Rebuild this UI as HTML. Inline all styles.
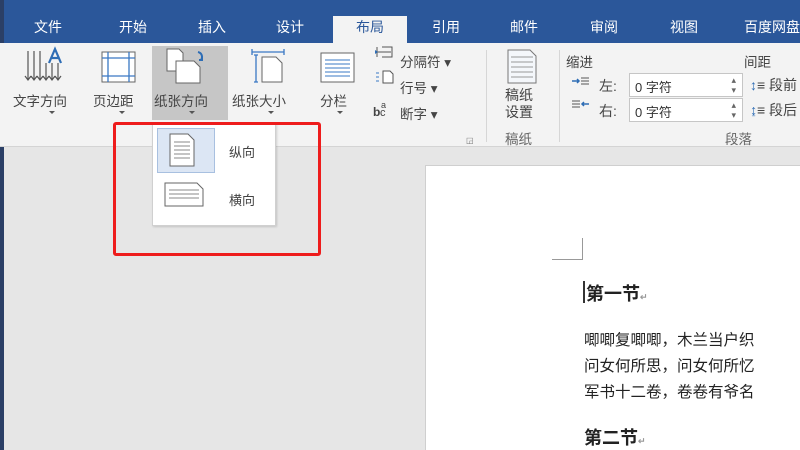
<!DOCTYPE html>
<html><head><meta charset="utf-8"><style>
*{margin:0;padding:0;box-sizing:border-box}
body{width:800px;height:450px;overflow:hidden;position:relative;background:#e6e6e6;font-family:"Liberation Sans","Noto Sans CJK SC",sans-serif;color:#333}
.a{position:absolute}
.tabs{left:0;top:0;width:800px;height:43px;background:#2b579a}
.tab{position:absolute;top:17px;color:#fff;font-size:14px;transform:translateX(-50%);white-space:nowrap}
.rib{left:0;top:43px;width:800px;height:104px;background:#f3f3f3;border-bottom:1px solid #d4d4d4}
.lb{position:absolute;font-size:13.5px;color:#444;white-space:nowrap}
.ar{position:absolute;width:0;height:0;border-left:3px solid transparent;border-right:3px solid transparent;border-top:3px solid #555}
.inp{position:absolute;width:114px;height:24px;background:#fff;border:1px solid #c6c6c6;font-size:13px;padding:3px 5px;color:#333}
.sep{position:absolute;width:1px;background:#d6d6d6}
</style></head><body>
<div class="a tabs"></div>
<div class="a" style="left:0;top:0;width:4px;height:450px;background:#2b3f66"></div>
<div class="a" style="left:333px;top:16px;width:74px;height:28px;background:#f3f3f3"></div>
<div class="tab" style="left:48px">文件</div>
<div class="tab" style="left:133px">开始</div>
<div class="tab" style="left:212px">插入</div>
<div class="tab" style="left:290px">设计</div>
<div class="tab" style="left:370px;color:#2b579a">布局</div>
<div class="tab" style="left:446px">引用</div>
<div class="tab" style="left:524px">邮件</div>
<div class="tab" style="left:604px">审阅</div>
<div class="tab" style="left:684px">视图</div>
<div class="tab" style="left:772px">百度网盘</div>
<div class="a rib"></div>
<div class="a" style="left:152px;top:46px;width:76px;height:74px;background:#c6c6c6"></div>
<svg class="a" style="left:0;top:43px" width="560" height="80">
<g stroke="#555" stroke-width="1.2" fill="none">
<path d="M28 8v28M34 8v28M40 8v28M46 20v16M52 20v16M58 20v16"/>
<path d="M25 33l3 4 3-4M31 33l3 4 3-4M37 33l3 4 3-4M43 33l3 4 3-4M49 33l3 4 3-4M55 33l3 4 3-4"/>
</g>
<path d="M49 20l6-14 6 14M51.5 15h7" stroke="#2e6db5" stroke-width="2.2" fill="none"/>
<rect x="102" y="9" width="33" height="30" fill="#fff" stroke="#666"/>
<path d="M108 9v30M129 9v30M102 15h33M102 33h33" stroke="#3a78c4" stroke-width="1.3"/>
<path d="M167 6h12l4 4v18h-16z" fill="#fff" stroke="#666"/>
<path d="M176 18h18l6 6v16h-24z" fill="#fff" stroke="#666"/>
<path d="M198 9c4 1 5 5 3 8M199 17l3 0 0-3" stroke="#2e6db5" stroke-width="2" fill="none"/>
<path d="M252 9h32M252 6v6M284 6v6M256 12v27M254 12h4M254 39h4" stroke="#3a78c4" stroke-width="1.3" fill="none"/>
<path d="M262 14h14l6 6v19h-20z" fill="#fff" stroke="#666"/>
<rect x="321" y="10" width="33" height="29" fill="#fff" stroke="#666"/>
<path d="M325 17h25M325 21h25M325 25h25M325 29h25M325 33h25" stroke="#3a78c4"/>
<path d="M377 4v10M377 9h4M381 9h10M382 4h10v10h-10" stroke="#555" fill="none"/>
<path d="M378 9l-3-2v4z" fill="#2e6db5"/>
<path d="M376 30h3M376 34h3M376 38h3" stroke="#3a78c4"/>
<path d="M383 28h7l3 3v9h-10z" fill="#fff" stroke="#555"/>
<text x="373" y="73" font-size="12" font-weight="bold" fill="#444" font-family="Liberation Sans">b</text>
<text x="380" y="73" font-size="11" fill="#444" font-family="Liberation Sans">c</text>
<text x="381" y="65" font-size="9" fill="#444" font-family="Liberation Sans">a</text>
<path d="M508 7h22l6 6v27h-28z" fill="#f4f7fb" stroke="#777"/>
<path d="M511 14h22M511 19h22M511 24h22M511 29h22M511 34h22" stroke="#999"/>
</svg>
<div class="lb" style="left:13px;top:90px">文字方向</div>
<div class="lb" style="left:93px;top:90px">页边距</div>
<div class="lb" style="left:154px;top:90px">纸张方向</div>
<div class="lb" style="left:232px;top:90px">纸张大小</div>
<div class="lb" style="left:320px;top:90px">分栏</div>
<div class="ar" style="left:49px;top:111px"></div>
<div class="ar" style="left:119px;top:111px"></div>
<div class="ar" style="left:189px;top:111px"></div>
<div class="ar" style="left:268px;top:111px"></div>
<div class="ar" style="left:337px;top:111px"></div>
<div class="lb" style="left:400px;top:51px">分隔符 ▾</div>
<div class="lb" style="left:400px;top:77px">行号 ▾</div>
<div class="lb" style="left:400px;top:103px">断字 ▾</div>
<div class="a" style="left:466px;top:136px;font-size:8px;color:#777">◲</div>
<div class="sep" style="left:486px;top:50px;height:92px"></div>
<div class="lb" style="left:505px;top:87px;line-height:17px;font-size:14px">稿纸<br>设置</div>
<div class="lb" style="left:505px;top:128px;color:#666">稿纸</div>
<div class="sep" style="left:559px;top:50px;height:92px"></div>
<div class="lb" style="left:566px;top:51px">缩进</div>
<div class="lb" style="left:744px;top:51px">间距</div>
<svg class="a" style="left:570px;top:73px" width="30" height="40">
<path d="M2 8h7M7 6l2 2-2 2" stroke="#2e6db5" stroke-width="1.5" fill="none"/>
<path d="M11 5h8M11 8h8M11 11h8M2 31h8M2 34h8M2 28h8" stroke="#555"/>
<path d="M19 31h-7M14 29l-2 2 2 2" stroke="#2e6db5" stroke-width="1.5" fill="none"/>
</svg>
<div class="lb" style="left:599px;top:76px;font-size:14px">左:</div>
<div class="lb" style="left:599px;top:101px;font-size:14px">右:</div>
<div class="inp" style="left:629px;top:73px">0 字符<span style="position:absolute;right:6px;top:1px;font-size:9px;color:#666;line-height:10px">▴<br>▾</span></div>
<div class="inp" style="left:629px;top:98px">0 字符<span style="position:absolute;right:6px;top:1px;font-size:9px;color:#666;line-height:10px">▴<br>▾</span></div>
<div class="lb" style="left:750px;top:75px;font-size:14px"><span style="color:#2e6db5">↕</span>≡ 段前</div>
<div class="lb" style="left:750px;top:100px;font-size:14px"><span style="color:#2e6db5">↨</span>≡ 段后</div>
<div class="lb" style="left:725px;top:128px;color:#666">段落</div>
<div class="a" style="left:425px;top:165px;width:375px;height:285px;background:#fff;border-left:1px solid #cfcfcf;border-top:1px solid #cfcfcf"></div>
<div class="a" style="left:552px;top:238px;width:31px;height:22px;border-right:1px solid #999;border-bottom:1px solid #999"></div>
<div class="a" style="left:583px;top:281px;width:2px;height:22px;background:#333"></div>
<div class="lb" style="left:586px;top:280px;font-size:18px;font-weight:bold;color:#222">第一节<span style="font-size:9px;color:#999">↵</span></div>
<div class="lb" style="left:584px;top:328px;font-size:15.5px;color:#222;line-height:26px">唧唧复唧唧，木兰当户织<br>问女何所思，问女何所忆<br>军书十二卷，卷卷有爷名</div>
<div class="lb" style="left:584px;top:424px;font-size:18px;font-weight:bold;color:#222">第二节<span style="font-size:9px;color:#999">↵</span></div>
<div class="a" style="left:152px;top:123px;width:124px;height:103px;background:#fff;border:1px solid #d0d0d0;box-shadow:1px 1px 2px rgba(0,0,0,.15)"></div>
<div class="a" style="left:157px;top:128px;width:58px;height:45px;background:#dce6f4;border:1px solid #a8c0e0"></div>
<svg class="a" style="left:160px;top:130px" width="60" height="80">
<path d="M10 4h18l6 6v26h-24z" fill="#fff" stroke="#666"/>
<path d="M14 12h16M14 16h16M14 20h16M14 24h16M14 28h16" stroke="#888"/>
<path d="M5 57h32l6 6v17h-38z" fill="#fff" stroke="#666" transform="translate(0,-4)"/>
<path d="M9 60h30M9 64h30M9 68h30" stroke="#888"/>
</svg>
<div class="lb" style="left:229px;top:142px;font-size:13px">纵向</div>
<div class="lb" style="left:229px;top:190px;font-size:13px">横向</div>
<div class="a" style="left:113px;top:122px;width:208px;height:134px;border:3px solid #ee1c1c;border-radius:3px"></div>
</body></html>
